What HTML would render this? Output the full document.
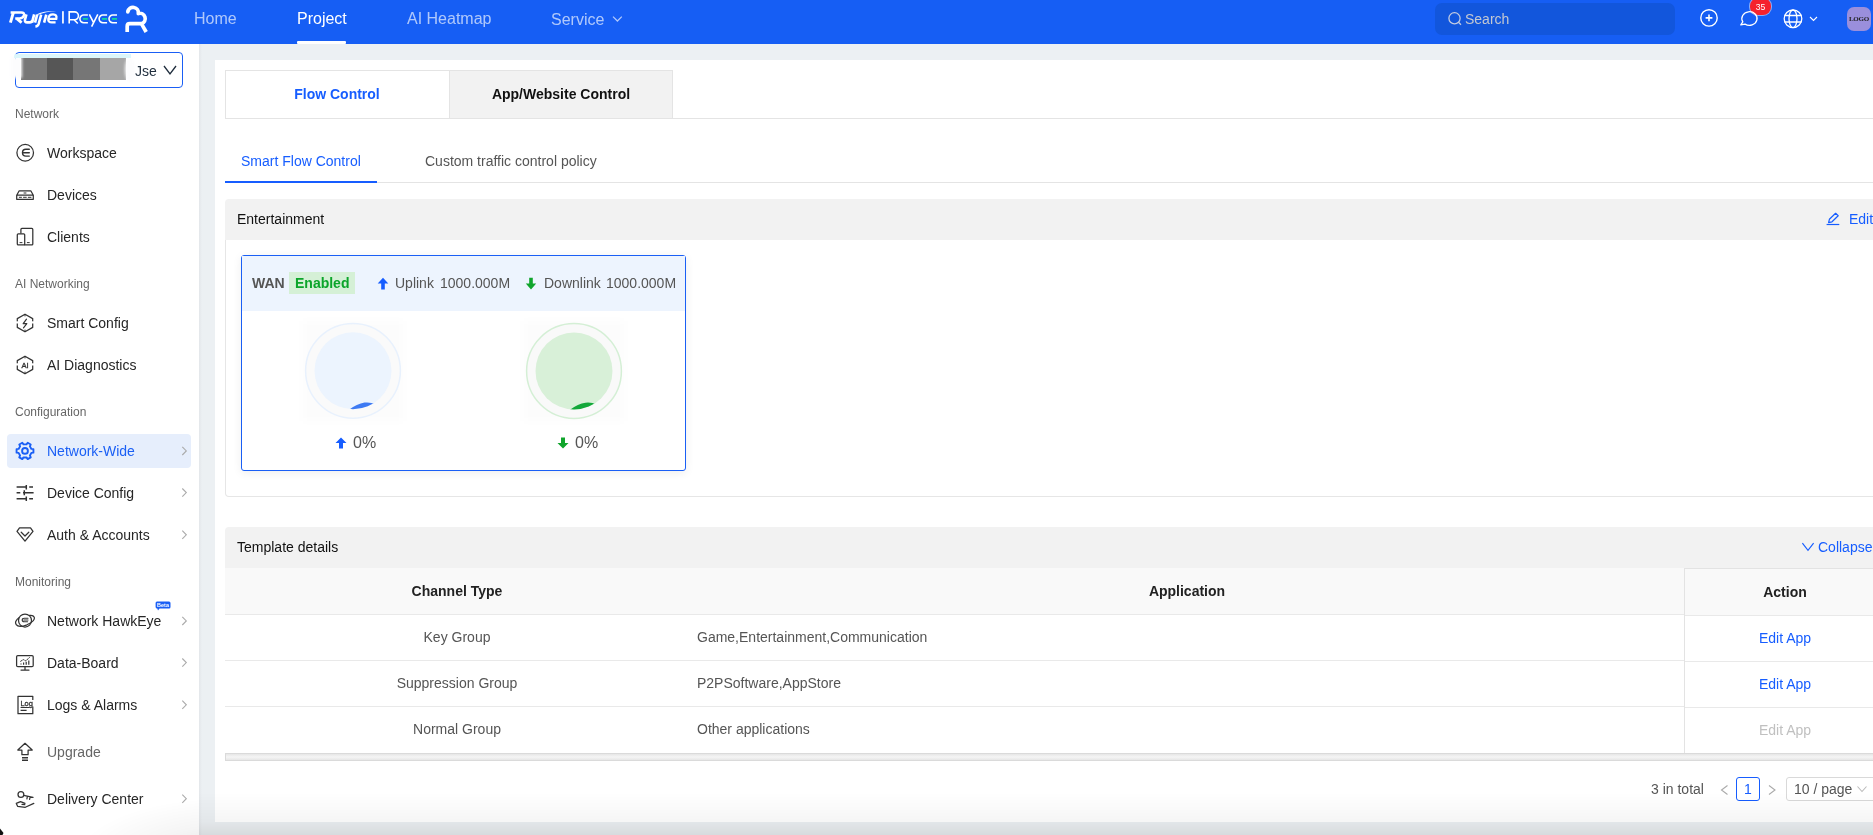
<!DOCTYPE html>
<html><head><meta charset="utf-8">
<style>
*{box-sizing:border-box;margin:0;padding:0}
html,body{width:1873px;height:835px;overflow:hidden;-webkit-font-smoothing:antialiased;background:#ecf0f3;font-family:"Liberation Sans",sans-serif;color:#333;position:relative}
.a{position:absolute;white-space:nowrap;will-change:transform}
.t14{font-size:14px;line-height:14px}
.t16{font-size:16px;line-height:16px}
.t12{font-size:12px;line-height:12px}
.b{font-weight:bold}
svg{position:absolute;overflow:visible}
.blk{position:absolute}
</style></head><body>
<!-- HEADER -->
<div class="blk" style="left:0;top:0;width:1873px;height:44px;background:#165ef4"></div>
<div class="a t16" style="left:194px;top:11px;color:rgba(255,255,255,.66)">Home</div>
<div class="a t16" style="left:297px;top:11px;color:#fff">Project</div>
<div class="blk" style="left:297px;top:41px;width:49px;height:3px;background:#fff;border-radius:1px"></div>
<div class="a t16" style="left:406.7px;top:11px;color:rgba(255,255,255,.66)">AI Heatmap</div>
<div class="a t16" style="left:551px;top:12px;color:rgba(255,255,255,.66)">Service</div>
<div class="blk" style="left:1435px;top:3px;width:240px;height:32px;background:#1256dc;border-radius:7px"></div>
<div class="a t14" style="left:1465px;top:12.4px;color:#c3c8d2">Search</div>
<div class="blk" style="left:1750px;top:-2px;width:21px;height:16.5px;background:#f5222d;border-radius:8px;box-shadow:0 0 0 1px rgba(230,240,255,.55)"></div>
<div class="a" style="left:1750px;top:1.6px;width:21px;text-align:center;font-size:8.6px;line-height:10px;color:#fff">35</div>
<div class="blk" style="left:1847px;top:7px;width:24px;height:24px;background:#9a8fdc;border-radius:7px"></div>
<div class="a" style="left:1847px;top:14px;width:24px;text-align:center;font-family:'Liberation Serif',serif;font-weight:bold;font-size:7px;line-height:10px;color:#222;letter-spacing:-0.2px">LOGO</div>

<!-- SIDEBAR -->
<div class="blk" style="left:0;top:44px;width:199px;height:791px;background:#fff"></div>
<div class="blk" style="left:199px;top:44px;width:3px;height:791px;background:linear-gradient(90deg,#e3e6ea,#ecf0f3)"></div>
<div class="blk" style="left:15px;top:52px;width:168px;height:36px;border:1.3px solid #1a5ff5;border-radius:4px"></div>
<div class="blk" style="left:21px;top:58px;width:26px;height:22px;background:#777"></div>
<div class="blk" style="left:47px;top:58px;width:26px;height:22px;background:#565656"></div>
<div class="blk" style="left:73px;top:58px;width:27px;height:22px;background:#767676"></div>
<div class="blk" style="left:100px;top:58px;width:26px;height:22px;background:#a6a6a6"></div>
<div class="blk" style="left:11px;top:57px;width:11px;height:21px;background:#fcfcfd;filter:blur(1.5px)"></div>
<div class="blk" style="left:125px;top:57px;width:10px;height:25px;background:#fcfcfd;filter:blur(1.5px);border-radius:50%"></div>
<div class="blk" style="left:14px;top:54px;width:117px;height:4px;background:#dcf6fa;border-radius:2px 0 0 0"></div>
<div class="a t14" style="left:134.7px;top:63.6px;color:#1f2d3d">Jse</div>

<div class="blk" style="left:7px;top:434px;width:184px;height:34px;background:#e6eefc;border-radius:4px"></div>

<div class="a t12" style="left:15px;top:107.9px;color:#666">Network</div>
<div class="a t14" style="left:47px;top:145.8px;color:#262626">Workspace</div>
<div class="a t14" style="left:47px;top:187.9px;color:#262626">Devices</div>
<div class="a t14" style="left:47px;top:229.9px;color:#262626">Clients</div>
<div class="a t12" style="left:15px;top:277.9px;color:#666">AI Networking</div>
<div class="a t14" style="left:47px;top:316.1px;color:#262626">Smart Config</div>
<div class="a t14" style="left:47px;top:358.1px;color:#262626">AI Diagnostics</div>
<div class="a t12" style="left:15px;top:405.5px;color:#666">Configuration</div>
<div class="a t14" style="left:47px;top:443.9px;color:#1a5ff5">Network-Wide</div>
<div class="a t14" style="left:47px;top:485.6px;color:#262626">Device Config</div>
<div class="a t14" style="left:47px;top:527.8px;color:#262626">Auth &amp; Accounts</div>
<div class="a t12" style="left:15px;top:575.5px;color:#666">Monitoring</div>
<div class="a t14" style="left:47px;top:613.9px;color:#262626">Network HawkEye</div>
<div class="a t14" style="left:47px;top:655.6px;color:#262626">Data-Board</div>
<div class="a t14" style="left:47px;top:697.8px;color:#262626">Logs &amp; Alarms</div>
<div class="a t14" style="left:47px;top:744.6px;color:#666">Upgrade</div>
<div class="a t14" style="left:47px;top:791.7px;color:#262626">Delivery Center</div>

<!-- CARD -->
<div class="blk" style="left:215px;top:60px;width:1680px;height:762px;background:#fff"></div>
<!-- top tabs -->
<div class="blk" style="left:225px;top:118px;width:1660px;height:1px;background:#e4e4e4"></div>
<div class="blk" style="left:225px;top:70px;width:448px;height:49px;border:1px solid #e4e4e4;background:#fff"></div>
<div class="blk" style="left:449px;top:71px;width:223px;height:47px;background:#f2f2f2;border-left:1px solid #e4e4e4"></div>
<div class="a t14 b" style="left:225px;width:224px;text-align:center;top:87.2px;color:#165dff">Flow Control</div>
<div class="a t14 b" style="left:449px;width:224px;text-align:center;top:87.2px;color:#111">App/Website Control</div>
<!-- sub tabs -->
<div class="blk" style="left:225px;top:182px;width:1660px;height:1px;background:#e4e4e4"></div>
<div class="blk" style="left:225px;top:181px;width:152px;height:2px;background:#165dff"></div>
<div class="a t14" style="left:241px;top:154.4px;color:#165dff">Smart Flow Control</div>
<div class="a t14" style="left:425px;top:154.4px;color:#555">Custom traffic control policy</div>
<!-- entertainment section -->
<div class="blk" style="left:225px;top:230px;width:1660px;height:267px;border:1px solid #e6e6e6;border-top:none;border-radius:0 0 4px 4px;background:#fff"></div>
<div class="blk" style="left:225px;top:199px;width:1660px;height:41px;background:#f2f2f2;border-radius:4px 4px 0 0"></div>
<div class="a t14" style="left:237px;top:212.4px;color:#111">Entertainment</div>
<div class="a t14" style="left:1849px;top:212.4px;color:#165dff">Edit</div>
<!-- WAN card -->
<div class="blk" style="left:241px;top:255px;width:445px;height:216px;border:1.2px solid #1a5ff5;border-radius:3px;background:#fff;box-shadow:0 2px 10px rgba(0,0,0,.07)"></div>
<div class="blk" style="left:242px;top:256px;width:443px;height:55px;background:#edf4fe"></div>
<div class="a t14 b" style="left:252px;top:276.1px;color:#555">WAN</div>
<div class="blk" style="left:289px;top:272px;width:66px;height:22px;background:#d5f0d6"></div>
<div class="a t14 b" style="left:295px;top:276.1px;color:#0ba52a">Enabled</div>
<div class="a t14" style="left:394.8px;top:276.1px;color:#555">Uplink</div>
<div class="a t14" style="left:440px;top:276.1px;color:#555">1000.000M</div>
<div class="a t14" style="left:543.5px;top:276.1px;color:#555">Downlink</div>
<div class="a t14" style="left:605.5px;top:276.1px;color:#555">1000.000M</div>
<!-- gauges -->
<div class="blk" style="left:303px;top:321px;width:100px;height:100px;background:rgba(0,0,0,.013);filter:blur(4px)"></div>
<div class="blk" style="left:524px;top:321px;width:100px;height:100px;background:rgba(0,0,0,.013);filter:blur(4px)"></div>
<svg style="left:0;top:0" width="1873" height="835" viewBox="0 0 1873 835">
<defs>
<clipPath id="c1"><circle cx="353" cy="370.8" r="38.5"/></clipPath>
<clipPath id="c2"><circle cx="574" cy="371" r="38.5"/></clipPath>
</defs>
<circle cx="353" cy="370.8" r="47.4" fill="#fafafa" stroke="#e8f1fd" stroke-width="1.5"/>
<circle cx="353" cy="370.8" r="38.5" fill="#ecf4fe"/>
<path clip-path="url(#c1)" d="M346 412Q356 404 364.5 402.6Q370 401.8 376 404.5V414H346Z" fill="#3d7af3"/>
<circle cx="574" cy="371" r="47.4" fill="#f9f9f9" stroke="#d4efd5" stroke-width="1.5"/>
<circle cx="574" cy="371" r="38.5" fill="#d8f0d8"/>
<path clip-path="url(#c2)" d="M567 412Q577 404 585.5 402.8Q591 402 597 404.7V414H567Z" fill="#13a83a"/>
</svg>
<div class="a t16" style="left:353px;top:434.5px;color:#555">0%</div>
<div class="a t16" style="left:574.5px;top:434.5px;color:#555">0%</div>

<!-- template details -->
<div class="blk" style="left:225px;top:527px;width:1660px;height:41px;background:#f2f2f2;border-radius:4px 4px 0 0"></div>
<div class="a t14" style="left:237px;top:540.2px;color:#111">Template details</div>
<div class="a t14" style="left:1818px;top:540.2px;color:#165dff">Collapse</div>
<div class="blk" style="left:225px;top:568px;width:1460px;height:46px;background:#f9f9f9"></div>
<div class="blk" style="left:225px;top:614px;width:1460px;height:1px;background:#e9e9e9"></div>
<div class="blk" style="left:225px;top:660px;width:1460px;height:1px;background:#e9e9e9"></div>
<div class="blk" style="left:225px;top:706px;width:1460px;height:1px;background:#e9e9e9"></div>
<div class="blk" style="left:1684px;top:568px;width:201px;height:1px;background:#e3e3e3"></div>
<div class="blk" style="left:1685px;top:569px;width:200px;height:46px;background:#f9f9f9"></div>
<div class="blk" style="left:1685px;top:615px;width:200px;height:1px;background:#e9e9e9"></div>
<div class="blk" style="left:1685px;top:661px;width:200px;height:1px;background:#e9e9e9"></div>
<div class="blk" style="left:1685px;top:707px;width:200px;height:1px;background:#e9e9e9"></div>
<div class="blk" style="left:1684px;top:568px;width:1px;height:186px;background:#e3e3e3"></div>
<div class="blk" style="left:225px;top:753px;width:1660px;height:8px;border:1px solid #dadada;border-right:none;background:linear-gradient(180deg,#e6e6e6,#f5f5f5 50%,#e6e6e6)"></div>
<div class="a t14 b" style="left:225px;width:464px;text-align:center;top:584.2px;color:#222">Channel Type</div>
<div class="a t14 b" style="left:689px;width:996px;text-align:center;top:584.2px;color:#222">Application</div>
<div class="a t14 b" style="left:1685px;width:200px;text-align:center;top:585.2px;color:#222">Action</div>
<div class="a t14" style="left:225px;width:464px;text-align:center;top:630.4px;color:#555">Key Group</div>
<div class="a t14" style="left:225px;width:464px;text-align:center;top:676.4px;color:#555">Suppression Group</div>
<div class="a t14" style="left:225px;width:464px;text-align:center;top:722.4px;color:#555">Normal Group</div>
<div class="a t14" style="left:697px;top:630.4px;color:#555">Game,Entertainment,Communication</div>
<div class="a t14" style="left:697px;top:676.4px;color:#555">P2PSoftware,AppStore</div>
<div class="a t14" style="left:697px;top:722.4px;color:#555">Other applications</div>
<div class="a t14" style="left:1685px;width:200px;text-align:center;top:631.4px;color:#165dff">Edit App</div>
<div class="a t14" style="left:1685px;width:200px;text-align:center;top:677.4px;color:#165dff">Edit App</div>
<div class="a t14" style="left:1685px;width:200px;text-align:center;top:723.4px;color:#c0c0c0">Edit App</div>
<!-- pagination -->
<div class="a t14" style="left:1651px;top:781.9px;color:#555">3 in total</div>
<div class="blk" style="left:1736px;top:777px;width:24px;height:24px;border:1.2px solid #165dff;border-radius:3px"></div>
<div class="a t14" style="left:1736px;width:24px;text-align:center;top:781.9px;color:#165dff">1</div>
<div class="blk" style="left:1786px;top:777px;width:100px;height:24px;border:1px solid #d9d9d9;border-radius:3px"></div>
<div class="a t14" style="left:1794px;top:781.9px;color:#555">10 / page</div>

<!-- ICONS -->
<svg style="left:0;top:0" width="1873" height="835" viewBox="0 0 1873 835" fill="none">
<!-- header logo -->
<g stroke="#fff" fill="none" stroke-linecap="butt" stroke-linejoin="round">
<path d="M10.6 12.5H21.3Q24.6 12.5 24 15.3Q23.3 18.4 19.6 18.4H15.2" stroke-width="2.5"/>
<path d="M13.4 12.5L10.4 22.6" stroke-width="2.9"/>
<path d="M16.8 18.6L21.6 22.6" stroke-width="2.9"/>
<path d="M26.4 14.4L25 19.6Q24.3 22.4 27.3 22.4H29.8Q31.8 22.4 32.3 20.4" stroke-width="2.6"/>
<path d="M34.2 14.4L32 22.6" stroke-width="2.7"/>
<path d="M37.2 14.6L35 22.6" stroke-width="2.6"/>
<path d="M41.2 14.6L38.6 24.2Q37.9 26.4 35.4 26.6" stroke-width="2.5"/>
<path d="M46.3 14.6L44.1 22.6" stroke-width="2.6"/>
<path d="M49.4 18.9H56.3Q57.3 14.4 53 14.4Q48.8 14.4 48.3 18.8Q47.9 22.4 51.8 22.4H55.6" stroke-width="2.3"/>
</g>
<path d="M36.8 14.3Q45 10.6 56.3 11.1Q46 11.6 37.6 15Z" fill="#fff"/>
<rect x="62.1" y="11.2" width="1.7" height="12.3" fill="#fff"/>
<g stroke="#fff" stroke-width="1.6" fill="none">
<path d="M69.2 23.5V11.9H74.5A3.95 3.95 0 0 1 74.5 19.8H69.2M74 19.8L77.8 23.5"/>
<path d="M87.9 15H83.75A3.85 3.85 0 0 0 83.75 22.7H87.9"/>
<path d="M89.3 14.4L93.6 22.6M97.8 14.4L91.6 26.6"/>
<path d="M107.1 15H102.95A3.85 3.85 0 0 0 102.95 22.7H107.1"/>
<path d="M117 15H112.85A3.85 3.85 0 0 0 112.85 22.7H117"/>
</g>
<g stroke="#16d59a" stroke-width="1.6"><path d="M82.9 18.85H87.9M102 18.85H107.1M112 18.85H117"/></g>
<g stroke="#fff" stroke-width="3.7" fill="none" stroke-linejoin="round">
<path d="M127.8 11.8A5.2 5.2 0 0 1 138.3 13.6A4.7 4.7 0 0 1 141.5 23.7H129.7Q127.2 23.7 127.2 26.2V32" stroke-linecap="butt"/>
<path d="M127.8 11.8L127.8 11.8" stroke-linecap="round"/>
<path d="M141.8 24.3L146.2 32"/>
</g>
<!-- header chevron service -->
<path d="M613 16.6L617.4 21L621.8 16.6" stroke="rgba(255,255,255,.66)" stroke-width="1.3" fill="none"/>
<!-- search icon -->
<g stroke="#c3cbe0" stroke-width="1.3" fill="none"><circle cx="1454.5" cy="18.3" r="5.6"/><path d="M1458.5 22.3L1461 24.8"/></g>
<!-- plus circle -->
<g stroke="#fff" stroke-width="1.4" fill="none"><circle cx="1709" cy="17.9" r="8.2"/><path d="M1709 14.5V21.3M1705.6 17.9H1712.4" stroke-width="1.6"/></g>
<!-- chat -->
<path d="M1740.8 24.9L1742.8 21.8A7.6 6.8 0 1 1 1745.1 24.1Z" stroke="#fff" stroke-width="1.3" fill="none" stroke-linejoin="round"/>
<!-- globe -->
<g stroke="#fff" stroke-width="1.3" fill="none"><circle cx="1793" cy="18.8" r="8.8"/><ellipse cx="1793" cy="18.8" rx="4" ry="8.8"/><path d="M1784.5 15.5H1801.5M1784.5 22H1801.5"/></g>
<path d="M1810 17L1813.5 20.5L1817 17" stroke="#fff" stroke-width="1.1" fill="none"/>

<!-- selector chevron -->
<path d="M164 66L170 74L176 66" stroke="#1f2d3d" stroke-width="1.3" fill="none"/>

<!-- sidebar icons -->
<g stroke="#333" stroke-width="1.25" fill="none" stroke-linecap="round" stroke-linejoin="round">
<!-- workspace -->
<circle cx="25.2" cy="152.7" r="8.3"/>
<path d="M29.3 149.3H25.9A3.4 3.4 0 0 0 25.9 156.1H29.3M23.6 152.7H29.3" stroke-width="1.4"/>
<!-- devices -->
<path d="M16.7 199.3V195.2L19.2 190.8H30.8L33.3 195.2V199.3Z M16.7 195.2H33.3"/>
<path d="M19.3 197.3H21.5M23.5 197.3H26.3M28.3 197.3H31M24 193H26" stroke-width="1"/>
<!-- clients -->
<path d="M20.9 233V229.4Q20.9 228.4 21.9 228.4H31.8Q32.8 228.4 32.8 229.4V243.9Q32.8 244.9 31.8 244.9H24.7"/>
<rect x="17.3" y="233.8" width="7.4" height="11.1" rx="1"/>
<path d="M20 242.6H22M27.3 242.6H29.3" stroke-width="1"/>
<!-- smart config hex -->
<path d="M25 314.2L32.7 318.6V327.4L25 331.8L17.3 327.4V318.6Z"/>
<path d="M26.5 319.2L23.2 323.7H26.8L23.5 327.8" stroke-width="1.2"/><path d="M25 314.5V316M25 330V331.5M25 356.5V358M25 372V373.5" stroke-width="1"/>
<!-- ai diag hex -->
<path d="M25 356.2L32.7 360.6V369.4L25 373.8L17.3 369.4V360.6Z"/>
</g>
<text x="25" y="368" text-anchor="middle" font-family="Liberation Sans" font-size="7.6" fill="#333" stroke="#333" stroke-width=".35">AI</text>
<!-- gaps in hexagons -->
<g fill="#fff">
<rect x="16" y="321.3" width="2.5" height="2.2"/><rect x="31.5" y="321.3" width="2.5" height="2.2"/>
<rect x="16" y="363.3" width="2.5" height="2.2"/><rect x="31.5" y="363.3" width="2.5" height="2.2"/>
</g>
<!-- gear (network-wide) -->
<g stroke="#1a5ff5" stroke-width="1.9" fill="none" stroke-linejoin="round">
<path d="M31.40 448.92 L33.42 449.16 L33.42 452.64 L31.40 452.88 L29.92 455.45 L30.72 457.32 L27.70 459.06 L26.49 457.43 L23.51 457.43 L22.30 459.06 L19.28 457.32 L20.08 455.45 L18.60 452.88 L16.58 452.64 L16.58 449.16 L18.60 448.92 L20.08 446.35 L19.28 444.48 L22.30 442.74 L23.51 444.37 L26.49 444.37 L27.70 442.74 L30.72 444.48 L29.92 446.35Z"/>
<circle cx="25" cy="450.9" r="2.9"/>
</g>
<g stroke="#333" stroke-width="1.3" fill="none" stroke-linecap="butt">
<!-- device config sliders -->
<path d="M16.6 487.1H26.3M29.2 487.1H33M26.3 484.9V489.4" stroke-width="1.5"/>
<path d="M16.6 492.7H20.3M23 492.7H33.6M24.3 490.3V495.2" stroke-width="1.5"/>
<path d="M16.6 498.8H26.3M29.2 498.8H33M26.3 496.5V501" stroke-width="1.5"/>
</g>
<g stroke="#333" stroke-width="1.25" fill="none" stroke-linecap="round" stroke-linejoin="round">
<!-- auth -->
<path d="M19.5 527.8H30.5L33 531.3L25 541.2L17 531.3Z"/>
<path d="M21.2 532.2L25 536L28.8 532.2"/>
<!-- hawkeye -->
<circle cx="25" cy="620.5" r="6.5"/>
<path d="M19 617.8Q14 621.5 16.2 624.6Q18.6 628 27 624.8Q35.5 621 34.3 617.3Q33.2 614.8 29.5 615.4"/>
<path d="M28 618.2H24.3Q22.2 618.2 22.2 620Q22.2 621.8 24.3 621.8H27.6M23.8 620H28" stroke-width="1.1"/>
<!-- data-board -->
<rect x="16.6" y="655.5" width="16.6" height="11.2" rx="1.2"/>
<path d="M25 666.7V669.8M21 670H29"/>
<path d="M20.6 661.3L23.3 659.6L25.8 660.8L29.4 657.6" stroke-width="1" stroke-dasharray="1.3 1.2"/><path d="M21 664.6V663.6M23.6 664.8V662.6M26.2 664.8V661.8M28.8 664.8V660.6" stroke-width="1.2" stroke-linecap="butt"/>
<!-- logs -->
<path d="M18 696.3H32.8V713.7H18Z"/>
<path d="M20.6 707.5H29.6M20.6 710.3H26.6" stroke-width="1.2" stroke-linecap="butt"/>
</g>
<rect x="31.5" y="700" width="3" height="6.5" fill="#fff"/><text x="20.4" y="705.6" font-family="Liberation Sans" font-size="7.6" fill="#333" stroke="#333" stroke-width=".3" textLength="12.4" lengthAdjust="spacingAndGlyphs">Log</text>
<g stroke="#333" stroke-width="1.25" fill="none" stroke-linecap="round" stroke-linejoin="round">
<!-- upgrade -->
<path d="M25 743.3L32.2 750H28.1V754.7H21.9V750H17.8Z"/>
<path d="M22 757.8H28M22 760.3H28" stroke-width="1.4" stroke-linecap="butt"/>
<!-- delivery -->
<circle cx="20.9" cy="794.6" r="2.9"/>
<path d="M23.7 795.4L33 797.4M27.4 796.3L26.9 798.8M30.1 796.9L29.6 799.3"/>
<path d="M16.3 803.4L20.5 801.6L25 803.3M16.3 803.4L17.6 806.3L25.3 807.3L33.8 803.4M22 804.3L24.8 804.6"/>
</g>
<!-- sidebar chevrons -->
<g stroke="#aaa" stroke-width="1.1" fill="none">
<path d="M182.3 446.8L186.3 450.9L182.3 455"/>
<path d="M182.3 488.5L186.3 492.6L182.3 496.7"/>
<path d="M182.3 530.7L186.3 534.8L182.3 538.9"/>
<path d="M182.3 616.8L186.3 620.9L182.3 625"/>
<path d="M182.3 658.5L186.3 662.6L182.3 666.7"/>
<path d="M182.3 700.7L186.3 704.8L182.3 708.9"/>
<path d="M182.3 794.6L186.3 798.7L182.3 802.8"/>
</g>
<!-- beta badge -->
<path d="M157 601.4H169Q170.5 601.4 170.5 603V607Q170.5 608.6 169 608.6H159.5L158 610.5L157.3 608.6Q155.6 608.6 155.6 607V603Q155.6 601.4 157 601.4Z" fill="#1a5ff5"/>
<text x="163" y="607.4" text-anchor="middle" font-family="Liberation Sans" font-weight="bold" font-size="5.5" fill="#fff">Beta</text>

<!-- edit pencil -->
<g stroke="#165dff" stroke-width="1.2" fill="none" stroke-linejoin="round">
<path d="M1828.6 222.6L1829.4 219.3L1835.6 213.3L1838.2 215.8L1832 221.8Z"/>
<path d="M1826.6 224.5H1839.3"/>
</g>
<!-- collapse chevron -->
<path d="M1802.4 543.1L1808 550.3L1813.6 543.1" stroke="#165dff" stroke-width="1.15" fill="none"/>
<!-- arrows -->
<g fill="#165dff">
<path d="M383 277.8L388.3 283.6H384.8V289.4H381.2V283.6H377.7Z"/>
<path d="M341 437.5L346.5 443H343V448.4H339V443H335.5Z"/>
</g>
<g fill="#10a52c">
<path d="M531 289.4L536.2 283.6H532.8V277.8H529.2V283.6H525.8Z"/>
<path d="M563 448.4L568.5 443H565V437.5H561V443H557.5Z"/>
</g>
<!-- pagination arrows -->
<g stroke="#aaa" stroke-width="1.1" fill="none">
<path d="M1727.5 785.5L1721.5 790L1727.5 794.5"/>
<path d="M1769 785.5L1775 790L1769 794.5"/>
<path d="M1857.5 786.5L1862 791.5L1866.5 786.5" stroke="#bbb"/>
</g>
</svg>

<!-- bottom shade -->
<div class="blk" style="left:199px;top:792px;width:1674px;height:43px;background:linear-gradient(180deg,rgba(0,0,0,0) 0,rgba(0,0,0,.035) 29px,rgba(0,0,0,.085) 43px)"></div>
<div class="blk" style="left:0;top:780px;width:199px;height:55px;background:radial-gradient(ellipse 150px 62px at 225px 80px,rgba(0,0,0,.12),rgba(0,0,0,.04) 55%,rgba(0,0,0,0) 100%)"></div>
<svg style="left:0;top:0" width="10" height="835"><path d="M0 828.5L3.5 833L2.5 835H0Z" fill="#111"/></svg>
</body></html>
